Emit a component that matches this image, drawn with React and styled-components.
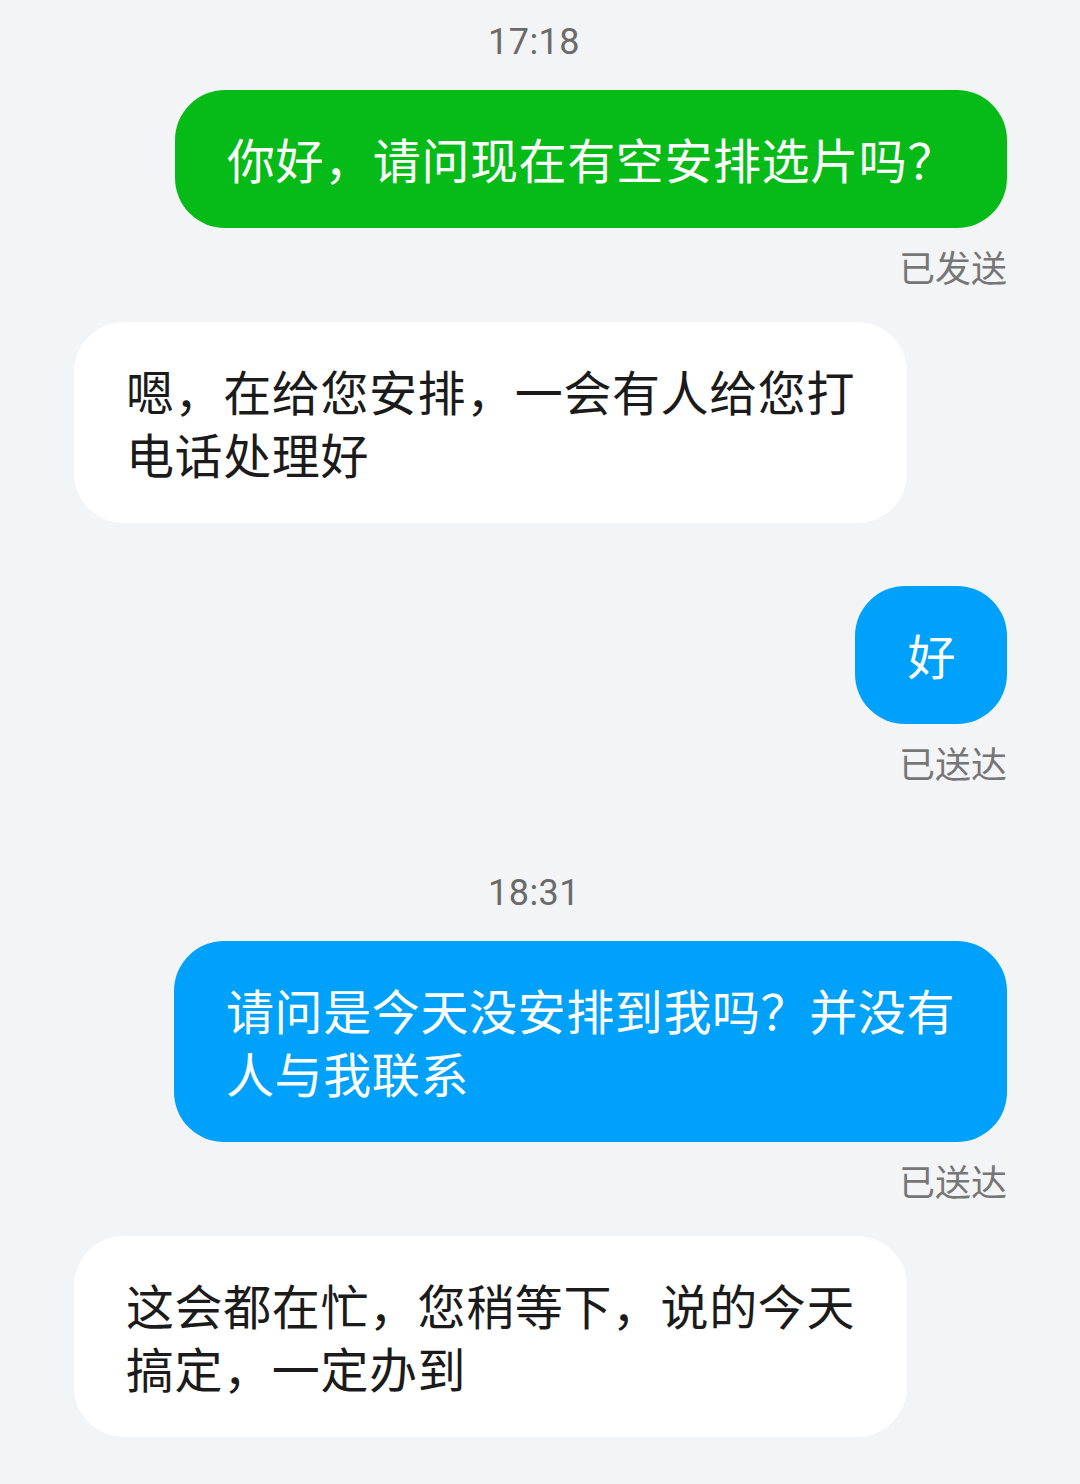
import React from 'react';
import styled, { createGlobalStyle } from 'styled-components';

const GlobalStyle = createGlobalStyle`
  html, body {
    margin: 0;
    padding: 0;
    background: #f3f4f6;
  }
  body {
    font-family: Roboto, "Noto Sans CJK SC", "Noto Sans", sans-serif;
  }
`;

const Thread = styled.div`
  width: 1080px;
  min-height: 1484px;
  box-sizing: border-box;
  padding: 22px 73px 0 74px;
  display: flex;
  flex-direction: column;
  background: #f3f4f6;
`;

const TimeStamp = styled.div`
  text-align: center;
  padding-right: 13px;
  font-size: 36px;
  line-height: 40px;
  color: #6a6a6a;
  margin-top: ${(p) => p.$mt || 0}px;
  margin-bottom: 28px;
  letter-spacing: 0.5px;
`;

const Row = styled.div`
  display: flex;
  justify-content: ${(p) => (p.$mine ? 'flex-end' : 'flex-start')};
  margin-top: ${(p) => p.$mt || 0}px;
`;

const Bubble = styled.div`
  max-width: 833px;
  box-sizing: border-box;
  padding: 37px 51px 38px 52px;
  border-radius: 50px;
  font-family: "Noto Sans CJK SC", sans-serif;
  font-size: 48px;
  letter-spacing: 0.6px;
  line-height: 63px;
  color: ${(p) => (p.$tone === 'light' ? '#1b1b1b' : '#ffffff')};
  background: ${(p) =>
    p.$tone === 'green' ? '#06bb18' : p.$tone === 'blue' ? '#00a1fa' : '#ffffff'};
  word-break: break-all;
`;

const Status = styled.div`
  align-self: flex-end;
  margin-top: 18px;
  margin-bottom: 36px;
  font-family: "Noto Sans CJK SC", sans-serif;
  font-size: 36px;
  line-height: 40px;
  color: #767676;
`;

const messages = [
  { type: 'time', text: '17:18' },
  { type: 'msg', mine: true, tone: 'green', text: '你好，请问现在有空安排选片吗？', status: '已发送' },
  { type: 'msg', tone: 'light', text: '嗯，在给您安排，一会有人给您打电话处理好' },
  { type: 'msg', mine: true, tone: 'blue', text: '好', status: '已送达', mt: 63 },
  { type: 'time', text: '18:31', mt: 55 },
  { type: 'msg', mine: true, tone: 'blue', text: '请问是今天没安排到我吗？并没有人与我联系', status: '已送达' },
  { type: 'msg', tone: 'light', text: '这会都在忙，您稍等下，说的今天搞定，一定办到' },
];

const App = () => {
  return (
    <>
      <GlobalStyle />
      <Thread>
        {messages.map((m, i) =>
          m.type === 'time' ? (
            <TimeStamp key={i} $mt={m.mt}>{m.text}</TimeStamp>
          ) : (
            <React.Fragment key={i}>
              <Row $mine={m.mine} $mt={m.mt}>
                <Bubble $tone={m.tone}>{m.text}</Bubble>
              </Row>
              {m.status && <Status>{m.status}</Status>}
            </React.Fragment>
          )
        )}
      </Thread>
    </>
  );
};

export default App;
